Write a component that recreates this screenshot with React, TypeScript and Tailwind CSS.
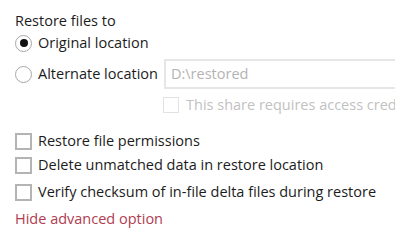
import React, { useState } from 'react';

function Radio({ checked }: { checked: boolean }) {
  return (
    <span className="flex h-[17px] w-[17px] shrink-0 items-center justify-center rounded-full border-[1.5px] border-[#a8a8a8] bg-white">
      {checked && <span className="h-[8px] w-[8px] rounded-full bg-[#111]" />}
    </span>
  );
}

function Box({ disabled }: { disabled?: boolean }) {
  return (
    <span
      className={
        disabled
          ? 'h-[16px] w-[16px] shrink-0 border-[1.5px] border-[#e2e2e2] bg-white'
          : 'h-[17px] w-[17px] shrink-0 border-2 border-[#b4b4b4] bg-white'
      }
    />
  );
}

export default function App() {
  const [location, setLocation] = useState<'original' | 'alternate'>('original');

  const options = [
    { label: 'Restore file permissions', cls: 'mt-[14px]' },
    { label: 'Delete unmatched data in restore location', cls: '' },
    { label: 'Verify checksum of in-file delta files during restore', cls: 'mt-[3px]' },
  ];

  return (
    <div className="h-[240px] w-[395px] overflow-hidden bg-white pl-[15px] pt-[11px] font-['Open_Sans',sans-serif] text-[14.5px] leading-[20px] text-[#1c1c1c]">
      <div className="h-[20px]">Restore files to</div>

      {/* Restore location */}
      <div className="flex h-[24px] cursor-pointer items-center gap-[6px]" onClick={() => setLocation('original')}>
        <Radio checked={location === 'original'} />
        <span>Original location</span>
      </div>

      <div className="mt-[4px] flex h-[30px] items-center whitespace-nowrap">
        <div className="flex cursor-pointer items-center gap-[6px]" onClick={() => setLocation('alternate')}>
          <Radio checked={location === 'alternate'} />
          <span>Alternate location</span>
        </div>
        <div className="ml-[6px] flex h-[30px] w-[260px] shrink-0 items-center border-2 border-[#e6e6e6] pl-[5px] text-[#b3b3b3]">
          D:\restored
        </div>
      </div>

      <div className="ml-[148px] mt-[6px] flex h-[20px] items-center gap-[7px] whitespace-nowrap text-[#c2c2c2]">
        <Box disabled />
        <span>This share requires access credentials</span>
      </div>

      {/* Advanced options */}
      {options.map((o) => (
        <div key={o.label} className={`flex h-[24px] items-center gap-[6px] whitespace-nowrap ${o.cls}`}>
          <Box />
          <span>{o.label}</span>
        </div>
      ))}

      <div className="mt-[5px] text-[#b03c50]">Hide advanced option</div>
    </div>
  );
}
